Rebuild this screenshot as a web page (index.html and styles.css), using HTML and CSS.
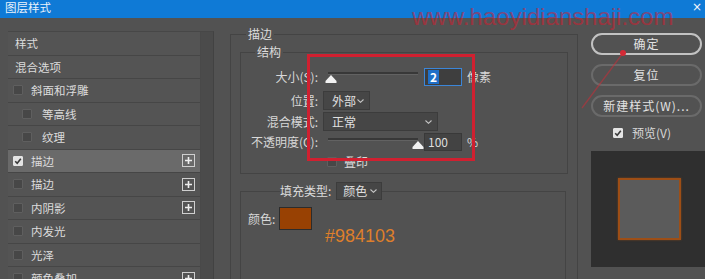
FILE: index.html
```html
<!DOCTYPE html>
<html lang="zh-CN">
<head>
<meta charset="utf-8">
<title>图层样式</title>
<link rel="stylesheet" href="styles.css">
</head>
<body>
<header class="titlebar">
  <span class="title">图层样式</span>
  <span class="close">×</span>
</header>
<div class="content">
  <aside class="styles-panel">
    <ul class="style-list">
      <li class="row head">样式</li>
      <li class="row head">混合选项</li>
      <li class="row"><span class="cb"></span><span class="label">斜面和浮雕</span></li>
      <li class="row sub"><span class="cb"></span><span class="label">等高线</span></li>
      <li class="row sub"><span class="cb"></span><span class="label">纹理</span></li>
      <li class="row active"><span class="cb checked"><svg viewBox="0 0 8 8"><polyline points="1.2,4.2 3.2,6.2 6.8,1.8" fill="none" stroke="#3a3a3a" stroke-width="1.6"/></svg></span><span class="label">描边</span><span class="plus"><svg viewBox="0 0 9 9"><path d="M1 4.5H8M4.5 1V8" stroke="#eeeeee" stroke-width="1.6"/></svg></span></li>
      <li class="row"><span class="cb"></span><span class="label">描边</span><span class="plus"><svg viewBox="0 0 9 9"><path d="M1 4.5H8M4.5 1V8" stroke="#eeeeee" stroke-width="1.6"/></svg></span></li>
      <li class="row"><span class="cb"></span><span class="label">内阴影</span><span class="plus"><svg viewBox="0 0 9 9"><path d="M1 4.5H8M4.5 1V8" stroke="#eeeeee" stroke-width="1.6"/></svg></span></li>
      <li class="row"><span class="cb"></span><span class="label">内发光</span></li>
      <li class="row"><span class="cb"></span><span class="label">光泽</span></li>
      <li class="row"><span class="cb"></span><span class="label">颜色叠加</span><span class="plus"><svg viewBox="0 0 9 9"><path d="M1 4.5H8M4.5 1V8" stroke="#eeeeee" stroke-width="1.6"/></svg></span></li>
    </ul>
    <div class="scrollbar"></div>
  </aside>

  <fieldset class="group stroke-group">
    <legend>描边</legend>
    <fieldset class="group structure">
      <legend>结构</legend>
      <div class="field r1">
        <span class="field-label">大小(S):</span>
        <div class="slider"><div class="track"><svg class="thumb" style="left:3%" viewBox="0 0 12 8"><polygon points="6,0 11.5,6 11.5,8 0.5,8 0.5,6" fill="#f2f2f2"/></svg></div></div>
        <div class="num focus"><span class="sel-text">2</span></div>
        <span class="unit">像素</span>
      </div>
      <div class="field r2">
        <span class="field-label">位置:</span>
        <div class="select w-pos"><span>外部</span><svg class="chev" viewBox="0 0 7 4"><polyline points="0.5,0.5 3.5,3.3 6.5,0.5" fill="none" stroke="#c4c4c4" stroke-width="1.1"/></svg></div>
      </div>
      <div class="field r3">
        <span class="field-label">混合模式:</span>
        <div class="select w-mode"><span>正常</span><svg class="chev" viewBox="0 0 7 4"><polyline points="0.5,0.5 3.5,3.3 6.5,0.5" fill="none" stroke="#c4c4c4" stroke-width="1.1"/></svg></div>
      </div>
      <div class="field r4">
        <span class="field-label">不透明度(C):</span>
        <div class="slider"><div class="track"><svg class="thumb" style="left:100%" viewBox="0 0 12 8"><polygon points="6,0 11.5,6 11.5,8 0.5,8 0.5,6" fill="#f2f2f2"/></svg></div></div>
        <div class="num"><span>100</span></div>
        <span class="unit">%</span>
      </div>
      <div class="field r5 indent">
        <span class="cb"></span><span class="cb-label">叠印</span>
      </div>
    </fieldset>
    <fieldset class="group fill">
      <legend><span>填充类型:</span><span class="select w-fill"><span>颜色</span><svg class="chev" viewBox="0 0 7 4"><polyline points="0.5,0.5 3.5,3.3 6.5,0.5" fill="none" stroke="#c4c4c4" stroke-width="1.1"/></svg></span></legend>
      <div class="color-row"><span>颜色:</span><span class="swatch"></span></div>
      <div class="hex">#984103</div>
    </fieldset>
  </fieldset>

  <aside class="actions">
    <button class="btn primary">确定</button>
    <button class="btn">复位</button>
    <button class="btn">新建样式(W)...</button>
    <div class="preview-toggle"><span class="cb checked"><svg viewBox="0 0 8 8"><polyline points="1.2,4.2 3.2,6.2 6.8,1.8" fill="none" stroke="#3a3a3a" stroke-width="1.6"/></svg></span><span class="cb-label">预览(V)</span></div>
    <div class="preview"><div class="preview-shape"></div></div>
  </aside>
</div>

<div class="watermark">www.haoyidianshaji.com</div>
<div class="highlight-box"></div>
<svg class="arrow" viewBox="0 0 705 279" width="705" height="279">
  <line x1="623" y1="53" x2="582" y2="108" stroke="rgba(214,40,52,0.5)" stroke-width="1.3"/>
  <circle cx="623" cy="53" r="3" fill="#d42a36"/>
</svg>
</body>
</html>
```

FILE: styles.css
```css
* { box-sizing: border-box; }
html, body { margin: 0; padding: 0; }
body {
  width: 705px;
  height: 279px;
  overflow: hidden;
  position: relative;
  background: #525252;
  font-family: "Noto Sans CJK SC", "Noto Sans", sans-serif;
  font-size: 12px;
  color: #d8d8d8;
}

/* title bar */
.titlebar {
  height: 18px;
  background: #0f7ad6;
  display: flex;
  justify-content: space-between;
  align-items: flex-start;
  padding: 0 3px 0 5px;
}
.title { font-size: 11.5px; line-height: 14px; color: #eaf2fb; }
.close { font-family: "DejaVu Sans", sans-serif; font-size: 12px; line-height: 12px; color: #f2f6fb; margin-top: 1px; }

.content { display: flex; align-items: flex-start; padding-left: 8px; }

/* left styles list */
.styles-panel {
  margin-top: 13px;
  width: 206px;
  height: 260px;
  display: flex;
  border-top: 1px solid #474747;
  border-right: 1px solid #424242;
  overflow: hidden;
}
.style-list { list-style: none; margin: 0; padding: 0; width: 192px; background: #545454; }
.scrollbar { width: 13px; background: #4b4b4b; border-left: 1px solid #494949; }
.row {
  display: flex;
  align-items: center;
  height: 23.5px;
  padding: 0 5px;
  border-bottom: 1px solid #464646;
  font-size: 11.5px;
  line-height: 14px;
  color: #dcdcdc;
  white-space: nowrap;
}
.row.head { padding-left: 7px; }
.row.sub { padding-left: 14px; }
.row .label { margin-left: 8px; }
.row.sub .label { margin-left: 10px; }
.row.active { background: #6a6a6a; }

.cb {
  width: 10px;
  height: 10px;
  border: 1px solid #5f5f5f;
  background: #474747;
  border-radius: 1px;
  display: inline-flex;
  align-items: center;
  justify-content: center;
  flex: none;
}
.cb.checked { background: #e4e4e4; border-color: #e4e4e4; }
.cb svg { width: 8px; height: 8px; display: block; }
.plus {
  margin-left: auto;
  width: 13px;
  height: 13px;
  border: 1px solid #cfcfcf;
  display: flex;
  align-items: center;
  justify-content: center;
}
.plus svg { width: 9px; height: 9px; display: block; }

/* middle groups */
.group { margin: 0; padding: 0; border: 1px solid #444444; min-width: 0; }
.group > legend { padding: 0 2px; line-height: 16px; font-size: 12px; color: #dcdcdc; }
.stroke-group { margin: 8px 0 0 16px; width: 348px; height: 270px; padding: 0 9px; }
.stroke-group > legend { margin-left: 6px; }
.structure { margin-top: 2px; width: 328px; height: 130px; }
.structure > legend { margin-left: 14px; }
.fill { margin-top: 8px; width: 326px; height: 120px; }
.fill > legend { margin-left: 39px; padding: 0; line-height: 18px; display: flex; align-items: center; gap: 5px; white-space: nowrap; }

.field { display: flex; align-items: center; height: 19px; line-height: 14px; white-space: nowrap; }
.field-label { width: 77px; text-align: right; margin-right: 5px; }
.r1 { margin-top: 7px; }
.r2 { margin-top: 5px; }
.r3 { margin-top: 2px; }
.r4 { margin-top: 2px; height: 18px; }
.r5 { margin-top: 5px; height: 12px; }
.field.indent { padding-left: 86px; }
.cb-label { margin-left: 7px; }

.slider { position: relative; width: 97px; height: 19px; align-self: flex-start; margin-right: 4px; }
.track {
  position: relative;
  margin: 5px 0 0 5px;
  width: 90px;
  height: 3px;
  background: #383838;
  border-bottom: 1px solid #626262;
}
.thumb { position: absolute; top: 3px; margin-left: -6px; width: 12px; height: 8px; display: block; }

.num {
  width: 38px;
  height: 18px;
  background: #434343;
  border: 1px solid #393939;
  display: flex;
  align-items: center;
  padding-left: 3px;
  color: #dedede;
}
.num.focus { border-color: #3b86d9; background: #3e3e3e; }
.sel-text { background: #1f6fc8; color: #ffffff; padding: 0 2px; font-weight: bold; }
.unit { margin-left: 5px; }

.select {
  display: flex;
  align-items: center;
  justify-content: space-between;
  height: 19px;
  padding: 0 5px 0 8px;
  background: #464646;
  border: 1px solid #3c3c3c;
  line-height: 14px;
  color: #e0e0e0;
  white-space: nowrap;
  flex: none;
}
.w-pos { width: 47px; }
.w-mode { width: 115px; }
.w-fill { width: 46px; height: 18px; padding: 0 4px 0 6px; }
.chev { width: 7px; height: 4px; display: block; flex: none; }

.color-row { display: flex; align-items: center; height: 23px; margin-top: 7px; padding-left: 7px; line-height: 14px; }
.swatch { width: 33px; height: 23px; background: #984103; border: 1px solid #2c2c2c; margin-left: 4px; }
.hex {
  margin: -3px 0 0 84px;
  font-family: "Liberation Sans", Arial, sans-serif;
  font-size: 18px;
  line-height: 18px;
  color: #de7f2b;
}

/* right column */
.actions { margin: 15px 0 0 13px; width: 114px; display: flex; flex-direction: column; align-items: flex-start; }
.btn {
  width: 111px;
  height: 22px;
  border-radius: 11px;
  border: 2px solid #6a6a6a;
  background: transparent;
  color: #e2e2e2;
  font-family: inherit;
  font-size: 12px;
  line-height: 14px;
  letter-spacing: 1px;
  padding: 0;
  margin: 0;
  white-space: nowrap;
}
.btn + .btn { margin-top: 9px; }
.btn.primary { border-color: #c2c2c2; }
.preview-toggle { display: flex; align-items: center; height: 18px; margin-top: 7px; padding-left: 22px; line-height: 14px; }
.preview-toggle .cb-label { margin-left: 9px; }
.preview { margin-top: 9px; width: 114px; height: 116px; background: #2f2f2f; padding: 27px 0 0 27px; }
.preview-shape { width: 63px; height: 62px; border: 2px solid #9d4e16; background: #5b5b5b; box-shadow: 0 0 2px rgba(160, 80, 20, 0.6); }

/* annotations */
.watermark {
  position: absolute;
  left: 412px;
  top: 5px;
  font-family: "Liberation Sans", Arial, sans-serif;
  font-size: 24px;
  line-height: 24px;
  color: rgba(214, 28, 48, 0.55);
  white-space: nowrap;
}
.highlight-box {
  position: absolute;
  left: 307px;
  top: 54px;
  width: 168px;
  height: 107px;
  border: 3px solid #d02030;
}
.arrow { position: absolute; left: 0; top: 0; pointer-events: none; }
```
